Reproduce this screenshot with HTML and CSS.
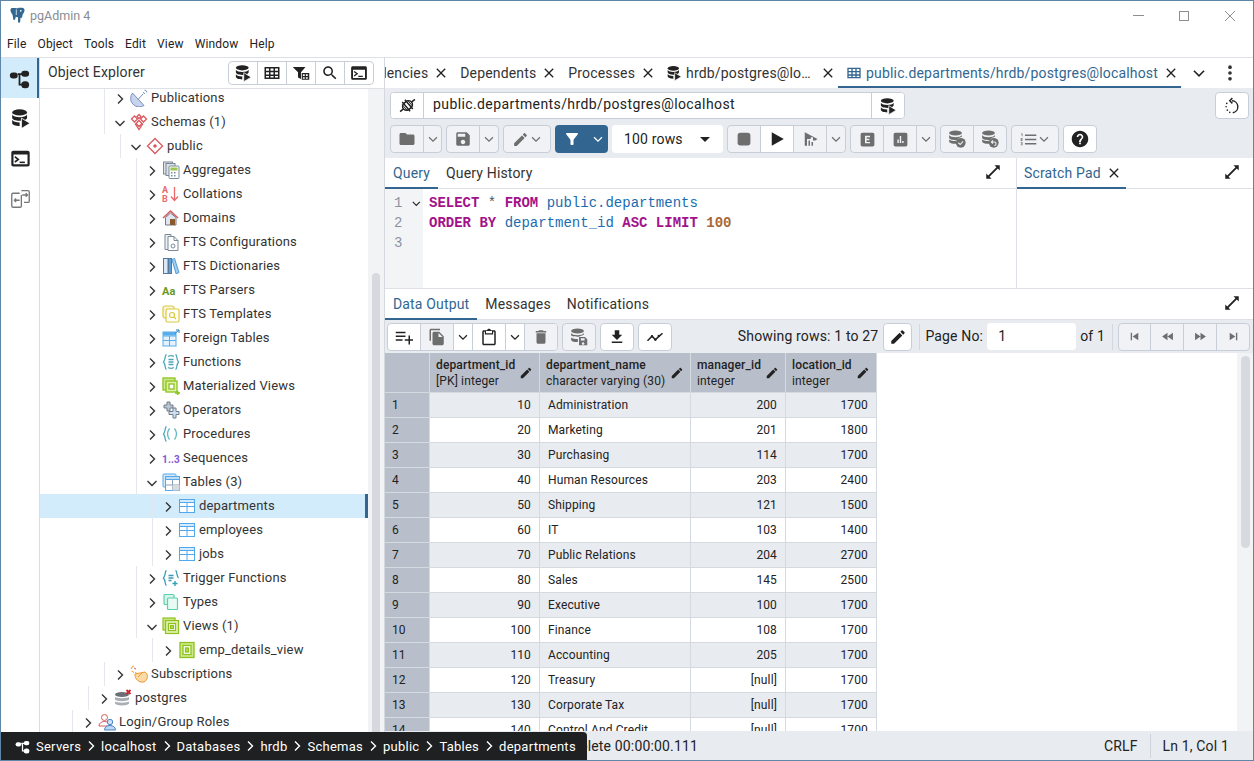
FILE: index.html
```html
<!DOCTYPE html>
<html lang="en">
<head>
    <meta charset="UTF-8">
    <title>pgAdmin 4</title>
    <link rel="stylesheet" href="styles.css">
</head>
<body>

<!-- Icon sprite -->
<svg class="sprite" xmlns="http://www.w3.org/2000/svg">
    <symbol id="i-right" viewBox="0 0 16 16"><path d="M6 3.500 10.500 8 6 12.500" fill="none" stroke="currentColor" stroke-width="1.400"/></symbol>
    <symbol id="i-down" viewBox="0 0 16 16"><path d="M3.500 6 8 10.500 12.500 6" fill="none" stroke="currentColor" stroke-width="1.400"/></symbol>
    <symbol id="i-close" viewBox="0 0 24 24"><path d="M19 6.410 17.590 5 12 10.590 6.410 5 5 6.410 10.590 12 5 17.590 6.410 19 12 13.410 17.590 19 19 17.590 13.410 12z"/></symbol>
    <symbol id="i-expand" viewBox="0 0 24 24"><path d="M21 3h-7l2.600 2.600L5.600 16.600 3 14v7h7l-2.600-2.600L18.400 7.400 21 10z"/></symbol>
    <symbol id="i-edit" viewBox="0 0 24 24"><path d="M3 17.250V21h3.750L17.810 9.940l-3.750-3.750L3 17.250zM20.710 7.040c.39-.39.39-1.020 0-1.410l-2.340-2.340c-.39-.39-1.020-.39-1.410 0l-1.830 1.830 3.750 3.750 1.830-1.830z"/></symbol>
    <symbol id="i-folder" viewBox="0 0 24 24"><path d="M10 4H4c-1.100 0-2 .9-2 2v12c0 1.100.9 2 2 2h16c1.100 0 2-.9 2-2V8c0-1.100-.9-2-2-2h-8l-2-2z"/></symbol>
    <symbol id="i-save" viewBox="0 0 24 24"><path d="M17 3H5c-1.110 0-2 .9-2 2v14c0 1.100.89 2 2 2h14c1.100 0 2-.9 2-2V7l-4-4zm-5 16c-1.660 0-3-1.340-3-3s1.340-3 3-3 3 1.340 3 3-1.340 3-3 3zm3-10H5V5h10v4z"/></symbol>
    <symbol id="i-filter" viewBox="0 0 24 24"><path d="M4.250 5.610C6.270 8.200 10 13 10 13v6c0 .55.45 1 1 1h2c.55 0 1-.45 1-1v-6s3.720-4.800 5.740-7.390c.51-.66.04-1.610-.79-1.610H5.040c-.83 0-1.300.95-.79 1.610z"/></symbol>
    <symbol id="i-stop" viewBox="0 0 24 24"><rect x="3.500" y="3.500" width="17" height="17" rx="3.500"/></symbol>
    <symbol id="i-play" viewBox="0 0 24 24"><path d="M5 3v18l16-9z"/></symbol>
    <symbol id="i-run-explain" viewBox="0 0 24 24"><path d="M5 3v18h3v-9h5v-2.500h3V14h3l3-2z"/><path d="M10 14h2v7h-2zM14 16h2v5h-2z"/></symbol>
    <symbol id="i-help" viewBox="0 0 24 24"><path d="M12 1C5.900 1 1 5.900 1 12s4.900 11 11 11 11-4.900 11-11S18.100 1 12 1zm1.200 18h-2.400v-2.400h2.400V19zm2.500-7.800-1 1.100C13.800 14.100 13.200 14.800 13.200 16h-2.400v-.6c0-1.200.5-2.300 1.300-3.100l1.400-1.400c.4-.4.7-1 .7-1.600 0-1.200-1-2.200-2.200-2.200S9.800 8.100 9.800 9.300H7.600C7.600 6.900 9.600 5 12 5s4.400 1.900 4.400 4.300c0 .8-.3 1.500-.7 1.900z"/></symbol>
    <symbol id="i-download" viewBox="0 0 24 24"><path d="M19 9h-4V3H9v6H5l7 7 7-7zM5 18v2h14v-2H5z"/></symbol>
    <symbol id="i-graph" viewBox="0 0 24 24"><path d="M2 17l6-6 4.500 4.500L22 7" fill="none" stroke="currentColor" stroke-width="2"/><circle cx="8" cy="11" r="1.600"/><circle cx="12.500" cy="15.500" r="1.600"/><circle cx="17" cy="10.500" r="1.600"/></symbol>
    <symbol id="i-delete" viewBox="0 0 24 24"><path d="M6 19c0 1.100.9 2 2 2h8c1.100 0 2-.9 2-2V7H6v12zM19 4h-3.500l-1-1h-5l-1 1H5v2h14V4z"/></symbol>
    <symbol id="i-paste" viewBox="0 0 24 24"><path d="M19 3h-4.200C14.400 1.800 13.300 1 12 1s-2.400.8-2.800 2H5c-1.100 0-2 .9-2 2v16c0 1.100.9 2 2 2h14c1.100 0 2-.9 2-2V5c0-1.100-.9-2-2-2zM8 4h8v3H8zm11 17H5V5h1.500v3.500h11V5H19z"/></symbol>
    <symbol id="i-copy" viewBox="0 0 24 24"><path d="M16 1H4c-1.100 0-2 .9-2 2v14h2V3h12V1zm-1 4 6 6v10c0 1.100-.9 2-2 2H7.990C6.890 23 6 22.100 6 21l.01-14c0-1.100.89-2 1.990-2h7zm-1 7h5.500L14 6.500V12z"/></symbol>
    <symbol id="i-addrow" viewBox="0 0 24 24"><path d="M14 10H1v2h13v-2zm0-5H1v2h13V5zm6 10v-5h-2v5h-5v2h5v5h2v-5h4v-2h-4zM1 17h9v-2H1v2z"/></symbol>
    <symbol id="i-search" viewBox="0 0 24 24"><path d="M15.500 14h-.79l-.28-.27C15.410 12.590 16 11.110 16 9.500 16 5.910 13.090 3 9.500 3S3 5.910 3 9.500 5.910 16 9.500 16c1.610 0 3.090-.59 4.230-1.570l.27.28v.79l5 4.990L20.490 19l-4.990-5zm-6 0C7.010 14 5 11.990 5 9.500S7.010 5 9.500 5 14 7.010 14 9.500 11.990 14 9.500 14z"/></symbol>
    <symbol id="i-grid" viewBox="0 0 24 24"><path d="M2 4h20v16H2zm2 2v3h4V6zm6 0v3h4V6zm6 0v3h4V6zM4 11v3h4v-3zm6 0v3h4v-3zm6 0v3h4v-3zM4 16v2h4v-2zm6 0v2h4v-2zm6 0v2h4v-2z" fill-rule="evenodd"/></symbol>
    <symbol id="i-filter-grid" viewBox="0 0 24 24"><path d="M1 4h17l-6 7v9l-4-2v-7z"/><path d="M13 12h10v9H13zm1.500 1.500v2.500h2.500v-2.500zm4 0v2.500h2.500v-2.500zm-4 4v2h2.500v-2zm4 0v2h2.500v-2z" fill-rule="evenodd"/></symbol>
    <symbol id="i-terminal" viewBox="0 0 24 24"><path d="M4 3h16c1.700 0 2.500 .8 2.500 2.500v13c0 1.700-.8 2.500-2.500 2.500H4c-1.700 0-2.500-.8-2.500-2.500v-13C1.500 3.800 2.300 3 4 3zm0 4.500v11h16v-11z" fill-rule="evenodd"/><path d="M5.500 10l4 3-4 3" fill="none" stroke="currentColor" stroke-width="1.800"/><path d="M11 15.500h6v1.800h-6z"/></symbol>
    <symbol id="i-db" viewBox="0 0 24 24"><ellipse cx="11" cy="5" rx="8.500" ry="3.500"/><path d="M2.500 7.500c1 2 4.500 3 8.500 3s7.500-1 8.500-3v3.500c0 2-3.800 3.500-8.500 3.500S2.500 13 2.500 11z"/><path d="M2.500 13.500c1 2 4.500 3 8.500 3v4c-4.700 0-8.500-1.500-8.500-3.500z"/><path d="M13 11.500l10 6-10 6z" stroke="#fff" stroke-width="1"/></symbol>
    <symbol id="i-nodes" viewBox="0 0 24 24"><rect x="1" y="5" width="9" height="7" rx="3.500"/><rect x="14" y="3" width="9" height="7" rx="3.500"/><rect x="14" y="15" width="9" height="8" rx="4"/><path d="M10 7h5M12 7v12h3" fill="none" stroke="currentColor" stroke-width="2"/></symbol>
    <symbol id="i-diff" viewBox="0 0 24 24" fill="none" stroke="currentColor" stroke-width="1.500"><path d="M11 6H3.500a1.500 1.500 0 0 0-1.500 1.500v13A1.500 1.500 0 0 0 3.500 22h8A1.500 1.500 0 0 0 13 20.500V8M13 3h7.500A1.500 1.500 0 0 1 22 4.500V15a1.500 1.500 0 0 1-1.500 1.500H16"/><path d="M11 14H5M7 12l-2 2 2 2M14 8h6M18 6l2 2-2 2"/></symbol>
    <symbol id="i-plug" viewBox="0 0 24 24" fill="none" stroke="currentColor" stroke-width="1.700"><g transform="rotate(-40 12 12)"><rect x="6" y="7.500" width="12" height="9" rx="4.500"/><path d="M1 12h5M18 12h5M10 5v14M14 5v14"/><path d="M8 7.500v9M16 7.500v9" stroke-width="1"/></g></symbol>
    <symbol id="i-refresh" viewBox="0 0 24 24" fill="none" stroke="currentColor" stroke-width="1.900"><path d="M12 5a8 8 0 0 1 1 15.900"/><path d="M9 20.400l-.01 0M5.800 17.500l-.01 0M4.100 13l-.01 0M5 8.500l-.01 0" stroke-width="2.200" stroke-linecap="round"/><path d="M12.500 1.500 9 5l3.500 3.500"/></symbol>
    <symbol id="i-box-e" viewBox="0 0 24 24"><path d="M3.500 1h17A2.500 2.500 0 0 1 23 3.500v17a2.500 2.500 0 0 1-2.500 2.500h-17A2.500 2.500 0 0 1 1 20.500v-17A2.500 2.500 0 0 1 3.500 1zM8 6v12h8v-2.200h-5.500v-2.800H15v-2.100h-4.500V8.200H16V6z" fill-rule="evenodd"/></symbol>
    <symbol id="i-box-chart" viewBox="0 0 24 24"><path d="M3.500 1h17A2.500 2.500 0 0 1 23 3.500v17a2.500 2.500 0 0 1-2.500 2.500h-17A2.500 2.500 0 0 1 1 20.500v-17A2.500 2.500 0 0 1 3.500 1zM7 12v5.500h2.300V12zm3.800-5.500v11h2.300v-11zm3.800 8v3h2.300v-3z" fill-rule="evenodd"/></symbol>
    <symbol id="i-db-check" viewBox="0 0 24 24"><ellipse cx="10" cy="4" rx="8.500" ry="3.200"/><path d="M1.500 6.500c1 2 4.500 3 8.500 3s7.500-1 8.500-3v2.500C17 9.700 13 10.700 11.500 13.500c-5 .3-10-1-10-3.500zM1.500 12.500c2 1.600 6 2.300 9.500 2.200-.2 1.300 0 2.500.5 3.700-5 .3-10-1-10-3.500z"/><circle cx="17" cy="17" r="6.500"/><path d="M13.800 17l2.400 2.400 4-4.200" fill="none" stroke="#f0f2f5" stroke-width="1.500"/></symbol>
    <symbol id="i-db-undo" viewBox="0 0 24 24"><ellipse cx="10" cy="4" rx="8.500" ry="3.200"/><path d="M1.500 6.500c1 2 4.500 3 8.500 3s7.500-1 8.500-3v2.500C17 9.700 13 10.700 11.500 13.500c-5 .3-10-1-10-3.500zM1.500 12.500c2 1.600 6 2.300 9.500 2.200-.2 1.300 0 2.500.5 3.700-5 .3-10-1-10-3.500z"/><circle cx="17" cy="17" r="6.500"/><path d="M14.500 16h3.300a2.300 2.300 0 0 1 0 4.600M16 13.800 13.800 16l2.200 2.200" fill="none" stroke="#f0f2f5" stroke-width="1.400"/></symbol>
    <symbol id="i-db-save" viewBox="0 0 24 24"><ellipse cx="10" cy="4" rx="8.500" ry="3.200"/><path d="M1.500 6.500c1 2 4.500 3 8.500 3s7.500-1 8.500-3v2.500C17 9.700 13 10.700 11.500 11.500c-5 .3-10-1-10-1.500zM1.500 12.500c2 1.600 6 2.300 9 2.200v4c-5 .3-9-1-9-3.500z"/><path d="M12 12h8l3 3v8H12zm2.500 1.500v3h5v-3zm3 5.500a1.700 1.700 0 1 0 .01 0z" fill-rule="evenodd"/></symbol>
    <symbol id="i-list" viewBox="0 0 24 24"><path d="M7 5h16v2H7zM7 11h16v2H7zM7 17h16v2H7zM1.500 3.500h2v4h-1v-3h-1zM1 10h2.500v2.500H2V13h1.500v1H1v-2.200h1.500V11H1zM1 16h2.500v4H1v-1h1.500v-.5H1.500v-1h1V17H1z"/></symbol>
    <symbol id="i-first" viewBox="0 0 24 24"><path d="M5 5h2.500v14H5zM19 5v14L8.500 12z"/></symbol>
    <symbol id="i-prev" viewBox="0 0 24 24"><path d="M12 5v14L2 12zM22 5v14l-10-7z"/></symbol>
    <symbol id="i-next" viewBox="0 0 24 24"><path d="M2 5v14l10-7zM12 5v14l10-7z"/></symbol>
    <symbol id="i-last" viewBox="0 0 24 24"><path d="M5 5v14l10.500-7zM16.500 5H19v14h-2.500z"/></symbol>
    <symbol id="i-kebab" viewBox="0 0 24 24"><circle cx="12" cy="5" r="2.200"/><circle cx="12" cy="12" r="2.200"/><circle cx="12" cy="19" r="2.200"/></symbol>

    <!-- tree icons -->
    <symbol id="t-pub" viewBox="0 0 18 18"><path d="M2.500 4A8.600 8.600 0 0 0 14 16.500z" fill="#c8d3ee" stroke="#7a8fc0"/><path d="M8 10.500l5-5.500M14.500 1a3 3 0 0 1 2.500 2.500M13 3.500a1.500 1.500 0 0 1 1.500 1.500" fill="none" stroke="#7a8fc0"/></symbol>
    <symbol id="t-schemas" viewBox="0 0 18 18" fill="none" stroke="#d9585f" stroke-width="1.300"><path d="M4.500 3 7.500 6l-3 3-3-3zM13.500 3l3 3-3 3-3-3zM9 7.500l3 3-3 3-3-3z"/><path d="M9 1.500 11 3.500 9 5.500 7 3.500zM5 10.500l4 6 4-6"/></symbol>
    <symbol id="t-public" viewBox="0 0 18 18"><path d="M9 1.500 16.500 9 9 16.500 1.500 9z" fill="#fff" stroke="#d9585f" stroke-width="1.300"/><circle cx="9" cy="9" r="1.800" fill="#d9585f"/></symbol>
    <symbol id="t-agg" viewBox="0 0 18 18"><rect x="1.500" y="1" width="9" height="12" fill="#dfe3e8" stroke="#7b8a99"/><rect x="4" y="2.500" width="9" height="12" fill="#dfe3e8" stroke="#7b8a99"/><rect x="7" y="5" width="10" height="12.500" rx="1" fill="#fff" stroke="#7b8a99"/><rect x="8.500" y="6.500" width="7" height="3" fill="#9ec54e"/><path d="M9 11h1.500v1.500H9zM12 11h1.500v1.500H12zM9 14h1.500v1.500H9zM12 14h1.500v1.500H12z" fill="#7b8a99"/></symbol>
    <symbol id="t-coll" viewBox="0 0 18 18"><text x="0" y="8" class="t-glyph" fill="#e9686d">A</text><text x="0" y="17" class="t-glyph" fill="#e9686d">B</text><path d="M12.500 2v13M9 11.500l3.500 4 3.500-4" fill="none" stroke="#e9686d" stroke-width="1.300"/></symbol>
    <symbol id="t-domain" viewBox="0 0 18 18"><path d="M3.500 8.500V16H14V8.500L8.500 4z" fill="#dfe6ef" stroke="#6e7d8c"/><path d="M1 9 8.500 2 16 9" fill="none" stroke="#d9585f" stroke-width="1.500"/><rect x="8" y="10" width="5" height="6" fill="#8a5a2b"/></symbol>
    <symbol id="t-ftsc" viewBox="0 0 18 18" fill="none" stroke="#7b8a99"><path d="M3 1.500h6v15H3z" fill="#eef0f3"/><path d="M6 3.500h6l4 4v10H6z" fill="#fff"/><path d="M12 3.500v4h4"/><circle cx="11" cy="13" r="2"/></symbol>
    <symbol id="t-ftsd" viewBox="0 0 18 18"><rect x="1.500" y="1.500" width="4.500" height="15" fill="#dbe9f6" stroke="#54789b"/><rect x="6.500" y="1.500" width="3" height="15" fill="#5e9fd6" stroke="#54789b"/><path d="M10 2.500l2.500-1 4.500 14-3 1.200z" fill="#a5cdef" stroke="#4f9cd9"/></symbol>
    <symbol id="t-ftsp" viewBox="0 0 18 18"><text x="0" y="14" class="t-aa">Aa</text></symbol>
    <symbol id="t-ftst" viewBox="0 0 18 18" fill="none" stroke="#dcc93c" stroke-width="1.200"><rect x="1" y="1" width="11" height="12" rx="2" fill="#fbf7d6"/><rect x="4" y="4" width="13" height="13" rx="1.500" fill="#fff"/><circle cx="10" cy="10" r="2.500"/><path d="M12 12l2 2"/></symbol>
    <symbol id="t-foreign" viewBox="0 0 18 18"><rect x="1" y="3" width="13" height="14" fill="#e5f2fc" stroke="#57aeea"/><path d="M1 7h13M1 11.500h13M7.500 7v10" stroke="#57aeea"/><rect x="1" y="3" width="13" height="3.500" fill="#57aeea"/><path d="M13 4.500 17 1M14 1h3v3" fill="none" stroke="#2f7fb8"/></symbol>
    <symbol id="t-func" viewBox="0 0 18 18" fill="none" stroke="#4fa8b8" stroke-width="1.300"><path d="M4.500 1.500C2.500 2 4 6 1.500 9 4 12 2.500 16 4.500 16.500M13.500 1.500C15.500 2 14 6 16.500 9 14 12 15.500 16 13.500 16.500M6 3.500a6 6 0 0 1 6 0M6 14.500a6 6 0 0 0 6 0"/><path d="M6.500 6.500h5M6.500 9h5M6.500 11.500h5"/></symbol>
    <symbol id="t-mview" viewBox="0 0 18 18" fill="none" stroke="#8dc21f" stroke-width="1.300"><rect x="1" y="1" width="12" height="12" fill="#cfe88a"/><rect x="4" y="4" width="11" height="11" fill="#dff0a8"/><rect x="7" y="7" width="5" height="5" fill="#fff"/><path d="M13 16h5M15 14l2 2-2 2"/></symbol>
    <symbol id="t-oper" viewBox="0 0 18 18"><path d="M5 1h3v3h3v3H8v3H5V7H2V4h3z" fill="#bcc4ce" stroke="#6e7d8c"/><path d="M11 7h3v3.500h3v3h-3V17h-3v-3.500H7v-3h4z" fill="#cfdff0" stroke="#6e7d8c"/></symbol>
    <symbol id="t-proc" viewBox="0 0 18 18" fill="none" stroke="#4fa8b8" stroke-width="1.300"><path d="M4.500 1.500C2.500 2 4 6 1.500 9 4 12 2.500 16 4.500 16.500"/><path d="M7.500 3.500C5 7 5 11 7.500 14.500M12.500 3.500c2.500 3.500 2.500 7.500 0 11" stroke="#5fb9c9"/></symbol>
    <symbol id="t-seq" viewBox="0 0 18 18"><text x="0" y="13.500" class="t-seqtext">1..3</text></symbol>
    <symbol id="t-table" viewBox="0 0 18 18"><rect x="1.500" y="2.500" width="15" height="13" fill="#fff" stroke="#52a8ec"/><rect x="1.500" y="2.500" width="15" height="3" fill="#d5eafb" stroke="#52a8ec"/><path d="M1.500 9.500h15M9 5.500v10" stroke="#52a8ec"/></symbol>
    <symbol id="t-tables" viewBox="0 0 18 18"><rect x="1" y="1" width="13" height="13" rx="1" fill="#d5eafb" stroke="#52a8ec"/><rect x="3.500" y="3.500" width="14" height="14" fill="#fff" stroke="#52a8ec"/><rect x="3.500" y="3.500" width="14" height="3" fill="#bfdcf5" stroke="#52a8ec"/><path d="M3.500 12h14M10.500 6.500v11" stroke="#8aa0b5"/><rect x="10.500" y="12" width="7" height="5.500" fill="#d8dce0"/></symbol>
    <symbol id="t-trig" viewBox="0 0 18 18" fill="none" stroke="#3d9ab0" stroke-width="1.300"><path d="M4.500 1.500C2.500 2 4 6 1.500 9 4 12 2.500 16 4.500 16.500M13.500 1.500C15.500 2 14 6 16.500 9"/><path d="M6.500 6.500h5M6.500 9h5M6.500 11.500h3"/><path d="M13 12v5M10.500 14.500h5" stroke="#2a9fb5"/></symbol>
    <symbol id="t-types" viewBox="0 0 18 18" fill="none" stroke="#58d1ac" stroke-width="1.200"><rect x="2" y="1.500" width="10" height="10" rx="1" fill="#d6f5ea"/><rect x="5.500" y="5" width="10" height="11.500" rx="1" fill="#e8faf4"/></symbol>
    <symbol id="t-views" viewBox="0 0 18 18" fill="none" stroke="#8dc21f" stroke-width="1.200"><rect x="1" y="1" width="12" height="12" fill="#cfe88a"/><rect x="3.500" y="3.500" width="13" height="13" fill="#dff0a8"/><rect x="6.500" y="6.500" width="7" height="7" fill="#fff"/><rect x="8.500" y="8.500" width="3" height="3" fill="#b6dc56"/></symbol>
    <symbol id="t-view" viewBox="0 0 18 18" fill="none" stroke="#8dc21f" stroke-width="1.300"><rect x="2" y="1.500" width="14" height="15" fill="#cfe88a"/><rect x="5" y="4.500" width="8" height="9" fill="#fff"/><rect x="7.500" y="7" width="3" height="4" fill="#b6dc56"/></symbol>
    <symbol id="t-subs" viewBox="0 0 18 18"><path d="M5 9a7.500 7.500 0 0 0 9 8 6 6 0 0 0 3.500-5.500c0-2-1-3.500-2.500-4.500z" fill="#fbd9a8" stroke="#ef9b2d"/><path d="M12 8 8 12M1 4a4 4 0 0 1 3-3M5 7.500l2 1M1.500 6 4 7.500" fill="none" stroke="#ef9b2d"/><path d="M4 3l2 1" stroke="#d9585f"/></symbol>
    <symbol id="t-server" viewBox="0 0 18 18"><ellipse cx="8" cy="5.500" rx="7" ry="2.500" fill="#6a6f75"/><path d="M1 8c1.500 1.500 12.500 1.500 14 0v2.500c-1.500 2.300-12.500 2.300-14 0zM1 12.500c1.500 1.500 12.500 1.500 14 0v2c-1.500 2.500-12.500 2.500-14 0z" fill="#a9aeb4"/><path d="M12.500 1l4 4M16.500 1l-4 4" stroke="#d3202d" stroke-width="1.800"/></symbol>
    <symbol id="t-roles" viewBox="0 0 18 18"><circle cx="6.500" cy="4.500" r="3" fill="#fff" stroke="#d9585f"/><path d="M1 13c0-3 2.500-4.500 5.500-4.500S12 10 12 13z" fill="#fff" stroke="#d9585f"/><circle cx="12" cy="9" r="2.700" fill="#cfe3f7" stroke="#4a86c5"/><path d="M6.500 17c0-3 2.500-4.500 5.500-4.500S17.500 14 17.500 17z" fill="#bcd8f3" stroke="#4a86c5"/></symbol>
</svg>

<div class="window">
    <!-- Title bar -->
    <div class="titlebar">
        <svg class="logo" viewBox="0 0 16 18"><path d="M2 1h4c.5 0 1 .3 1.500.3S9 .8 10 .8h3c1.500 0 2.500 1 2.500 2.700 0 2-1.500 3.500-2 4.500-.4 1-.2 2.500-.8 3.200-.5.6-1.200.4-1.500-.2l-.3 4.300c-.1 1.200-1 1.900-1.700 1.400-.6-.5-.7-1.500-.7-2.700V10.500c-1.200.7-1.800.3-2.200-.5l-.8 3c-.4 1-1.300 1.200-1.800.4C3 12 3.300 9.500 2.500 8 1.700 6.500.5 5.500.5 3.500.5 2 1 1 2 1z"/><circle cx="11.500" cy="4" r=".9" fill="#fff"/><path d="M6.700 2.500v6" stroke="#fff" stroke-width=".8"/></svg>
        <span class="app-name">pgAdmin 4</span>
        <div class="win-controls">
            <span class="win-min"></span>
            <span class="win-max"></span>
            <svg class="win-close" viewBox="0 0 12 12"><path d="M1 1l10 10M11 1 1 11" stroke="#8a8f94" stroke-width="1" fill="none"/></svg>
        </div>
    </div>

    <!-- Menu -->
    <div class="menubar">
        <a>File</a><a>Object</a><a>Tools</a><a>Edit</a><a>View</a><a>Window</a><a>Help</a>
    </div>

    <div class="app">
        <!-- Left rail -->
        <div class="rail">
            <div class="rail-item active"><svg class="rail-ico"><use href="#i-nodes"/></svg></div>
            <div class="rail-item"><svg class="rail-ico"><use href="#i-db"/></svg></div>
            <div class="rail-item"><svg class="rail-ico"><use href="#i-terminal"/></svg></div>
            <div class="rail-item muted"><svg class="rail-ico"><use href="#i-diff"/></svg></div>
        </div>

        <!-- Object explorer -->
        <div class="explorer">
            <div class="explorer-head">
                <span class="panel-title">Object Explorer</span>
                <div class="group light-group head-tools">
                    <span class="btn"><svg class="ico"><use href="#i-db"/></svg></span>
                    <span class="btn"><svg class="ico"><use href="#i-grid"/></svg></span>
                    <span class="btn"><svg class="ico"><use href="#i-filter-grid"/></svg></span>
                    <span class="btn"><svg class="ico"><use href="#i-search"/></svg></span>
                    <span class="btn"><svg class="ico"><use href="#i-terminal"/></svg></span>
                </div>
            </div>
            <div class="explorer-body">
                <div class="tree">
                    <div class="tree-inner">
                        <div class="row"><span class="indent lvl3"></span><svg class="twist"><use href="#i-right"/></svg><svg class="node"><use href="#t-pub"/></svg><span>Publications</span></div>
                        <div class="row"><span class="indent lvl3"></span><svg class="twist"><use href="#i-down"/></svg><svg class="node"><use href="#t-schemas"/></svg><span>Schemas (1)</span></div>
                        <div class="row"><span class="indent lvl4"></span><svg class="twist"><use href="#i-down"/></svg><svg class="node"><use href="#t-public"/></svg><span>public</span></div>
                        <div class="row"><span class="indent lvl5"></span><svg class="twist"><use href="#i-right"/></svg><svg class="node"><use href="#t-agg"/></svg><span>Aggregates</span></div>
                        <div class="row"><span class="indent lvl5"></span><svg class="twist"><use href="#i-right"/></svg><svg class="node"><use href="#t-coll"/></svg><span>Collations</span></div>
                        <div class="row"><span class="indent lvl5"></span><svg class="twist"><use href="#i-right"/></svg><svg class="node"><use href="#t-domain"/></svg><span>Domains</span></div>
                        <div class="row"><span class="indent lvl5"></span><svg class="twist"><use href="#i-right"/></svg><svg class="node"><use href="#t-ftsc"/></svg><span>FTS Configurations</span></div>
                        <div class="row"><span class="indent lvl5"></span><svg class="twist"><use href="#i-right"/></svg><svg class="node"><use href="#t-ftsd"/></svg><span>FTS Dictionaries</span></div>
                        <div class="row"><span class="indent lvl5"></span><svg class="twist"><use href="#i-right"/></svg><svg class="node"><use href="#t-ftsp"/></svg><span>FTS Parsers</span></div>
                        <div class="row"><span class="indent lvl5"></span><svg class="twist"><use href="#i-right"/></svg><svg class="node"><use href="#t-ftst"/></svg><span>FTS Templates</span></div>
                        <div class="row"><span class="indent lvl5"></span><svg class="twist"><use href="#i-right"/></svg><svg class="node"><use href="#t-foreign"/></svg><span>Foreign Tables</span></div>
                        <div class="row"><span class="indent lvl5"></span><svg class="twist"><use href="#i-right"/></svg><svg class="node"><use href="#t-func"/></svg><span>Functions</span></div>
                        <div class="row"><span class="indent lvl5"></span><svg class="twist"><use href="#i-right"/></svg><svg class="node"><use href="#t-mview"/></svg><span>Materialized Views</span></div>
                        <div class="row"><span class="indent lvl5"></span><svg class="twist"><use href="#i-right"/></svg><svg class="node"><use href="#t-oper"/></svg><span>Operators</span></div>
                        <div class="row"><span class="indent lvl5"></span><svg class="twist"><use href="#i-right"/></svg><svg class="node"><use href="#t-proc"/></svg><span>Procedures</span></div>
                        <div class="row"><span class="indent lvl5"></span><svg class="twist"><use href="#i-right"/></svg><svg class="node"><use href="#t-seq"/></svg><span>Sequences</span></div>
                        <div class="row"><span class="indent lvl5"></span><svg class="twist"><use href="#i-down"/></svg><svg class="node"><use href="#t-tables"/></svg><span>Tables (3)</span></div>
                        <div class="row selected"><span class="indent lvl6"></span><svg class="twist"><use href="#i-right"/></svg><svg class="node"><use href="#t-table"/></svg><span>departments</span></div>
                        <div class="row"><span class="indent lvl6"></span><svg class="twist"><use href="#i-right"/></svg><svg class="node"><use href="#t-table"/></svg><span>employees</span></div>
                        <div class="row"><span class="indent lvl6"></span><svg class="twist"><use href="#i-right"/></svg><svg class="node"><use href="#t-table"/></svg><span>jobs</span></div>
                        <div class="row"><span class="indent lvl5"></span><svg class="twist"><use href="#i-right"/></svg><svg class="node"><use href="#t-trig"/></svg><span>Trigger Functions</span></div>
                        <div class="row"><span class="indent lvl5"></span><svg class="twist"><use href="#i-right"/></svg><svg class="node"><use href="#t-types"/></svg><span>Types</span></div>
                        <div class="row"><span class="indent lvl5"></span><svg class="twist"><use href="#i-down"/></svg><svg class="node"><use href="#t-views"/></svg><span>Views (1)</span></div>
                        <div class="row"><span class="indent lvl6"></span><svg class="twist"><use href="#i-right"/></svg><svg class="node"><use href="#t-view"/></svg><span>emp_details_view</span></div>
                        <div class="row"><span class="indent lvl3"></span><svg class="twist"><use href="#i-right"/></svg><svg class="node"><use href="#t-subs"/></svg><span>Subscriptions</span></div>
                        <div class="row"><span class="indent lvl2"></span><svg class="twist"><use href="#i-right"/></svg><svg class="node"><use href="#t-server"/></svg><span>postgres</span></div>
                        <div class="row"><span class="indent lvl1"></span><svg class="twist"><use href="#i-right"/></svg><svg class="node"><use href="#t-roles"/></svg><span>Login/Group Roles</span></div>
                    </div>
                </div>
                <div class="tree-scroll"><div class="tree-thumb"></div></div>
            </div>
        </div>

        <!-- Query tool -->
        <div class="main">
            <div class="tabbar">
                <div class="tab-strip">
                    <div class="doc-tab"><span>Dependencies</span><svg class="x"><use href="#i-close"/></svg></div>
                    <div class="doc-tab"><span>Dependents</span><svg class="x"><use href="#i-close"/></svg></div>
                    <div class="doc-tab"><span>Processes</span><svg class="x"><use href="#i-close"/></svg></div>
                    <div class="doc-tab"><svg class="tab-ico"><use href="#i-db"/></svg><span class="tab-short">hrdb/postgres@localhost</span><svg class="x"><use href="#i-close"/></svg></div>
                    <div class="doc-tab active"><svg class="tab-ico"><use href="#i-grid"/></svg><span>public.departments/hrdb/postgres@localhost</span><svg class="x"><use href="#i-close"/></svg></div>
                </div>
                <svg class="tab-more"><use href="#i-down"/></svg>
                <svg class="tab-kebab"><use href="#i-kebab"/></svg>
            </div>

            <div class="query-toolbar">
                <div class="conn-row">
                    <div class="conn">
                        <span class="btn light"><svg class="ico"><use href="#i-plug"/></svg></span>
                        <span class="conn-text">public.departments/hrdb/postgres@localhost</span>
                        <span class="btn light"><svg class="ico"><use href="#i-db"/></svg></span>
                    </div>
                    <div class="group light-group refresh"><span class="btn"><svg class="ico"><use href="#i-refresh"/></svg></span></div>
                </div>
                <div class="tool-row">
                    <div class="group off"><span class="btn"><svg class="ico"><use href="#i-folder"/></svg></span><span class="btn caret caret-sm"><svg class="chev"><use href="#i-down"/></svg></span></div>
                    <div class="group off"><span class="btn"><svg class="ico"><use href="#i-save"/></svg></span><span class="btn caret"><svg class="chev"><use href="#i-down"/></svg></span></div>
                    <div class="group off"><span class="btn btn-wide"><svg class="ico ico-sm"><use href="#i-edit"/></svg><svg class="chev"><use href="#i-down"/></svg></span></div>
                    <div class="filter-btn"><svg class="ico"><use href="#i-filter"/></svg><svg class="chev"><use href="#i-down"/></svg></div>
                    <div class="rows-select"><span>100 rows</span><span class="select-caret"></span></div>
                    <div class="group off">
                        <span class="btn"><svg class="ico"><use href="#i-stop"/></svg></span>
                        <span class="btn on"><svg class="ico"><use href="#i-play"/></svg></span>
                        <span class="btn"><svg class="ico"><use href="#i-run-explain"/></svg></span>
                        <span class="btn caret"><svg class="chev"><use href="#i-down"/></svg></span>
                    </div>
                    <div class="group off">
                        <span class="btn"><svg class="ico ico-box"><use href="#i-box-e"/></svg></span>
                        <span class="btn"><svg class="ico ico-box"><use href="#i-box-chart"/></svg></span>
                        <span class="btn caret"><svg class="chev"><use href="#i-down"/></svg></span>
                    </div>
                    <div class="group off">
                        <span class="btn"><svg class="ico"><use href="#i-db-check"/></svg></span>
                        <span class="btn"><svg class="ico"><use href="#i-db-undo"/></svg></span>
                    </div>
                    <div class="group off"><span class="btn btn-wide"><svg class="ico ico-sm"><use href="#i-list"/></svg><svg class="chev"><use href="#i-down"/></svg></span></div>
                    <div class="group light-group"><span class="btn"><svg class="ico"><use href="#i-help"/></svg></span></div>
                </div>
            </div>

            <!-- Editor and scratch pad -->
            <div class="editor-pane">
                <div class="editor-col">
                    <div class="sub-tabs">
                        <span class="sub-tab active">Query</span>
                        <span class="sub-tab">Query History</span>
                        <svg class="expand"><use href="#i-expand"/></svg>
                    </div>
                    <div class="editor">
                        <div class="gutter">
                            <div class="gutter-line"><span>1</span><svg class="fold"><use href="#i-down"/></svg></div>
                            <div class="gutter-line"><span>2</span></div>
                            <div class="gutter-line"><span>3</span></div>
                        </div>
                        <div class="code">
                            <div class="code-line"><span class="kw">SELECT</span> <span class="op">*</span> <span class="kw">FROM</span> <span class="id">public.departments</span></div>
                            <div class="code-line"><span class="kw">ORDER BY</span> <span class="id">department_id</span> <span class="kw">ASC LIMIT</span> <span class="num">100</span></div>
                        </div>
                    </div>
                </div>
                <div class="scratch-col">
                    <div class="sub-tabs">
                        <span class="sub-tab active scratch-tab">Scratch Pad<svg class="x"><use href="#i-close"/></svg></span>
                        <svg class="expand"><use href="#i-expand"/></svg>
                    </div>
                </div>
            </div>

            <!-- Results -->
            <div class="results">
                <div class="sub-tabs">
                    <span class="sub-tab active">Data Output</span>
                    <span class="sub-tab">Messages</span>
                    <span class="sub-tab">Notifications</span>
                    <svg class="expand"><use href="#i-expand"/></svg>
                </div>
                <div class="data-toolbar">
                    <div class="group light-group">
                        <span class="btn"><svg class="ico"><use href="#i-addrow"/></svg></span>
                        <span class="btn dim"><svg class="ico"><use href="#i-copy"/></svg></span>
                        <span class="btn caret"><svg class="chev"><use href="#i-down"/></svg></span>
                        <span class="btn"><svg class="ico"><use href="#i-paste"/></svg></span>
                        <span class="btn caret"><svg class="chev"><use href="#i-down"/></svg></span>
                        <span class="btn dim"><svg class="ico"><use href="#i-delete"/></svg></span>
                    </div>
                    <div class="group off"><span class="btn"><svg class="ico"><use href="#i-db-save"/></svg></span></div>
                    <div class="group light-group"><span class="btn"><svg class="ico"><use href="#i-download"/></svg></span></div>
                    <div class="group light-group"><span class="btn"><svg class="ico"><use href="#i-graph"/></svg></span></div>
                    <div class="pager">
                        <span class="pg-text">Showing rows: 1 to 27</span>
                        <div class="group light-group page-edit"><span class="btn"><svg class="ico"><use href="#i-edit"/></svg></span></div>
                        <span class="vsep"></span>
                        <span class="pg-text">Page No:</span>
                        <span class="page-input">1</span>
                        <span class="pg-text">of 1</span>
                        <span class="vsep"></span>
                        <div class="group off nav-group">
                            <span class="btn"><svg class="ico ico-xs"><use href="#i-first"/></svg></span>
                            <span class="btn"><svg class="ico ico-xs"><use href="#i-prev"/></svg></span>
                            <span class="btn"><svg class="ico ico-xs"><use href="#i-next"/></svg></span>
                            <span class="btn"><svg class="ico ico-xs"><use href="#i-last"/></svg></span>
                        </div>
                    </div>
                </div>
                <div class="grid-wrap">
                    <div class="grid-area">
                        <table class="grid">
                            <colgroup><col class="c0"><col class="c1"><col class="c2"><col class="c3"><col class="c4"></colgroup>
                            <thead>
                                <tr>
                                    <th></th>
                                    <th><div class="th-box"><div><b>department_id</b><br>[PK] integer</div><svg class="th-edit"><use href="#i-edit"/></svg></div></th>
                                    <th><div class="th-box"><div><b>department_name</b><br>character varying (30)</div><svg class="th-edit"><use href="#i-edit"/></svg></div></th>
                                    <th><div class="th-box"><div><b>manager_id</b><br>integer</div><svg class="th-edit"><use href="#i-edit"/></svg></div></th>
                                    <th><div class="th-box"><div><b>location_id</b><br>integer</div><svg class="th-edit"><use href="#i-edit"/></svg></div></th>
                                </tr>
                            </thead>
                            <tbody>
                                <tr><td class="rn">1</td><td class="n">10</td><td>Administration</td><td class="n">200</td><td class="n">1700</td></tr>
                                <tr><td class="rn">2</td><td class="n">20</td><td>Marketing</td><td class="n">201</td><td class="n">1800</td></tr>
                                <tr><td class="rn">3</td><td class="n">30</td><td>Purchasing</td><td class="n">114</td><td class="n">1700</td></tr>
                                <tr><td class="rn">4</td><td class="n">40</td><td>Human Resources</td><td class="n">203</td><td class="n">2400</td></tr>
                                <tr><td class="rn">5</td><td class="n">50</td><td>Shipping</td><td class="n">121</td><td class="n">1500</td></tr>
                                <tr><td class="rn">6</td><td class="n">60</td><td>IT</td><td class="n">103</td><td class="n">1400</td></tr>
                                <tr><td class="rn">7</td><td class="n">70</td><td>Public Relations</td><td class="n">204</td><td class="n">2700</td></tr>
                                <tr><td class="rn">8</td><td class="n">80</td><td>Sales</td><td class="n">145</td><td class="n">2500</td></tr>
                                <tr><td class="rn">9</td><td class="n">90</td><td>Executive</td><td class="n">100</td><td class="n">1700</td></tr>
                                <tr><td class="rn">10</td><td class="n">100</td><td>Finance</td><td class="n">108</td><td class="n">1700</td></tr>
                                <tr><td class="rn">11</td><td class="n">110</td><td>Accounting</td><td class="n">205</td><td class="n">1700</td></tr>
                                <tr><td class="rn">12</td><td class="n">120</td><td>Treasury</td><td class="n">[null]</td><td class="n">1700</td></tr>
                                <tr><td class="rn">13</td><td class="n">130</td><td>Corporate Tax</td><td class="n">[null]</td><td class="n">1700</td></tr>
                                <tr><td class="rn">14</td><td class="n">140</td><td>Control And Credit</td><td class="n">[null]</td><td class="n">1700</td></tr>
                            </tbody>
                        </table>
                    </div>
                    <div class="grid-scroll"><div class="grid-thumb"></div></div>
                </div>
            </div>

            <!-- Status bar -->
            <div class="statusbar">
                <span class="status-msg">Total rows: 27</span>
                <span class="status-msg">Query complete 00:00:00.111</span>
                <span class="status-end">CRLF</span>
                <span class="status-end bordered">Ln 1, Col 1</span>
            </div>
        </div>
    </div>

    <!-- Breadcrumb popup sits over the explorer and status bar -->
    <div class="breadcrumbs">
        <svg class="crumb-ico"><use href="#i-nodes"/></svg>
        <span>Servers</span><svg class="crumb-sep"><use href="#i-right"/></svg>
        <span>localhost</span><svg class="crumb-sep"><use href="#i-right"/></svg>
        <span>Databases</span><svg class="crumb-sep"><use href="#i-right"/></svg>
        <span>hrdb</span><svg class="crumb-sep"><use href="#i-right"/></svg>
        <span>Schemas</span><svg class="crumb-sep"><use href="#i-right"/></svg>
        <span>public</span><svg class="crumb-sep"><use href="#i-right"/></svg>
        <span>Tables</span><svg class="crumb-sep"><use href="#i-right"/></svg>
        <span>departments</span>
    </div>
</div>

</body>
</html>
```

FILE: styles.css
```css
* {
    box-sizing: border-box;
}

html, body {
    margin: 0;
    height: 100%;
    overflow: hidden;
    background: #fff;
}

body {
    font-family: "Roboto", sans-serif;
    font-size: 14px;
    letter-spacing: .16px;
    color: #222;
}

.sprite {
    display: none;
}

.t-glyph {
    font: bold 9px "Roboto", sans-serif;
}

.t-aa {
    font: bold 11px "Roboto", sans-serif;
    fill: #6a9a1f;
}

.t-seqtext {
    font: bold 10px "Roboto", sans-serif;
    fill: #8455d6;
}

.window {
    position: relative;
    width: 1254px;
    height: 761px;
    display: flex;
    flex-direction: column;
    border: 1px solid #5f86a6;
    overflow: hidden;
    background: #fff;
}

/* Title bar */
.titlebar {
    height: 29px;
    display: flex;
    align-items: center;
    padding-left: 9px;
    flex-shrink: 0;
}

.logo {
    width: 15px;
    height: 17px;
    fill: #336791;
}

.app-name {
    margin-left: 5px;
    font-size: 12.500px;
    letter-spacing: 0;
    color: #888d93;
}

.win-controls {
    margin-left: auto;
    display: flex;
    align-items: center;
    height: 100%;
}

.win-min {
    width: 11px;
    height: 1px;
    background: #8a8f94;
    margin-right: 35px;
}

.win-max {
    width: 10px;
    height: 10px;
    border: 1px solid #8a8f94;
    margin-right: 35px;
}

.win-close {
    width: 12px;
    height: 12px;
    margin-right: 17px;
}

/* Menu */
.menubar {
    height: 28px;
    display: flex;
    align-items: center;
    gap: 11px;
    padding-left: 6px;
    font-size: 12px;
    border-bottom: 1px solid #dde0e5;
    flex-shrink: 0;
}

.app {
    flex: 1;
    display: flex;
    min-height: 0;
}

/* Left rail */
.rail {
    width: 39px;
    border-right: 1px solid #dadde3;
    flex-shrink: 0;
}

.rail-item {
    height: 40px;
    display: flex;
    align-items: center;
    justify-content: center;
    color: #222;
}

.rail-item.active {
    background: #d3ecfb;
    border-right: 2px solid #326690;
}

.rail-item.muted {
    color: #777;
}

.rail-ico {
    width: 21px;
    height: 21px;
    fill: currentColor;
}

/* Object explorer */
.explorer {
    width: 345px;
    display: flex;
    flex-direction: column;
    border-right: 1px solid #d5d9df;
    flex-shrink: 0;
}

.explorer-head {
    height: 31px;
    display: flex;
    align-items: center;
    justify-content: space-between;
    padding: 0 10px 0 8px;
    border-bottom: 1px solid #dde0e5;
    flex-shrink: 0;
}

.panel-title {
    font-size: 14px;
    color: #333;
    padding-bottom: 2px;
}

.group.head-tools {
    height: 24px;
}

.head-tools .btn {
    width: 29px;
}

.head-tools .btn:first-child {
    width: 28px;
}

.explorer-body {
    flex: 1;
    display: flex;
    min-height: 0;
}

.tree {
    flex: 1;
    overflow: hidden;
}

.tree-inner {
    margin-top: -3px;
}

.row {
    height: 24px;
    display: flex;
    align-items: stretch;
    font-size: 13px;
    color: #333;
}

.row span:last-child {
    margin-left: 3px;
    line-height: 24px;
    white-space: nowrap;
}

.row.selected {
    background: #d3ecfb;
    border-right: 3px solid #326690;
}

.indent {
    border-right: 1px solid #e4e7eb;
    flex-shrink: 0;
}

.lvl1 { width: 33px; }
.lvl2 { width: 49px; }
.lvl3 { width: 65px; }
.lvl4 { width: 81px; }
.lvl5 { width: 97px; }
.lvl6 { width: 113px; }

.twist {
    width: 16px;
    height: 16px;
    margin: 5px 0 0 7px;
    color: #333;
    flex-shrink: 0;
}

.node {
    width: 18px;
    height: 18px;
    margin: 3px 0 0 2px;
    flex-shrink: 0;
}

.tree-scroll {
    width: 16px;
    background: #f2f3f5;
    padding: 184px 0 0 4px;
    flex-shrink: 0;
}

.tree-thumb {
    width: 8px;
    height: 100%;
    border-radius: 4px 4px 0 0;
    background: #d6d9de;
}

/* Main area */
.main {
    flex: 1;
    min-width: 0;
    display: flex;
    flex-direction: column;
}

.tabbar {
    height: 30px;
    display: flex;
    align-items: center;
    flex-shrink: 0;
}

.tab-strip {
    width: 796px;
    height: 100%;
    display: flex;
    justify-content: flex-end;
    overflow: hidden;
}

.doc-tab {
    display: flex;
    align-items: center;
    flex-shrink: 0;
    padding: 2px 2px 0 8px;
    gap: 5px;
    white-space: nowrap;
    color: #333;
    border-bottom: 2px solid transparent;
}

.doc-tab:nth-child(-n+3) {
    padding-left: 9px;
}

.doc-tab.active {
    color: #326690;
    border-bottom-color: #326690;
}

.doc-tab.active .tab-ico {
    fill: #326690;
}

.tab-ico {
    width: 16px;
    height: 16px;
    fill: #222;
    margin-right: -1px;
}

.tab-short {
    width: 129px;
    overflow: hidden;
    text-overflow: ellipsis;
}

.x {
    width: 16px;
    height: 16px;
    fill: #222;
    flex-shrink: 0;
}

.tab-more {
    width: 18px;
    height: 18px;
    margin-left: 9px;
    color: #222;
    stroke-width: 2;
}

.tab-kebab {
    width: 20px;
    height: 20px;
    margin-left: 12px;
    fill: #333;
}

/* Toolbars */
.query-toolbar {
    height: 70px;
    padding: 4px 2px 0 5px;
    background: #e8ebf0;
    flex-shrink: 0;
}

.conn-row {
    display: flex;
    justify-content: space-between;
    height: 27px;
}

.conn {
    width: 515px;
    display: flex;
    border: 1px solid #c8ced8;
    border-radius: 4px;
    background: #fff;
    overflow: hidden;
}

.conn .btn {
    width: 33px;
    border-left: 0;
    background: #fff;
    flex-shrink: 0;
}

.conn .ico {
    width: 21px;
    height: 21px;
}

.conn .btn:last-child .ico {
    width: 18px;
    height: 18px;
}

.conn .btn:last-child {
    border-left: 1px solid #c8ced8;
}

.conn-text {
    flex: 1;
    line-height: 23px;
    padding-left: 9px;
    letter-spacing: .4px;
    border-left: 1px solid #c8ced8;
}

.tool-row {
    display: flex;
    gap: 4px;
    margin-top: 6px;
    height: 28px;
}

.group {
    display: flex;
    border: 1px solid #c8ced8;
    border-radius: 4px;
    height: 100%;
    overflow: hidden;
    flex-shrink: 0;
}

.btn {
    width: 33px;
    display: flex;
    align-items: center;
    justify-content: center;
    border-left: 1px solid #c8ced8;
    color: #222;
}

.btn:first-child {
    width: 32px;
    border-left: 0;
}

.btn.caret {
    width: 19px;
}

.btn.caret-sm {
    width: 18px;
}

.btn.btn-wide {
    width: 46px;
    gap: 0;
}

.group.off {
    background: #f0f2f5;
}

.group.off .btn {
    color: #6e6e6e;
}

.group.off .btn.on {
    background: #fff;
    color: #222;
}

.light-group {
    background: #fff;
}

.btn.dim {
    background: #f0f2f5;
    color: #6e6e6e;
}

.ico {
    width: 18px;
    height: 18px;
    fill: currentColor;
}

.ico-sm {
    width: 17px;
    height: 17px;
}

.ico-xs {
    width: 13px;
    height: 13px;
}

.ico-box {
    width: 15px;
    height: 15px;
}

.chev {
    width: 14px;
    height: 14px;
    flex-shrink: 0;
}

.refresh {
    height: 27px;
    margin-right: 2px;
}

.filter-btn {
    width: 53px;
    display: flex;
    align-items: center;
    justify-content: space-between;
    padding: 0 3px 0 8px;
    border-radius: 4px;
    background: #326690;
    color: #fff;
    fill: #fff;
}

.rows-select {
    width: 111px;
    display: flex;
    align-items: center;
    justify-content: space-between;
    padding: 0 13px 0 12px;
    border-radius: 4px;
    background: #fff;
}

.select-caret {
    width: 0;
    height: 0;
    border: 5px solid transparent;
    border-top-color: #222;
    border-bottom: 0;
}

/* Sub tabs */
.sub-tabs {
    height: 31px;
    display: flex;
    align-items: stretch;
    border-bottom: 1px solid #dde0e5;
    flex-shrink: 0;
}

.sub-tab {
    display: flex;
    align-items: center;
    padding: 0 8px;
    color: #333;
    margin-bottom: -1px;
    border-bottom: 2px solid transparent;
}

.sub-tab.active {
    color: #326690;
    border-bottom-color: #326690;
}

.scratch-tab {
    gap: 5px;
    padding: 0 4px 0 7px;
}

.expand {
    width: 18px;
    height: 18px;
    margin: 5px 12px 0 auto;
    fill: #222;
}

/* Editor */
.editor-pane {
    height: 131px;
    display: flex;
    border-bottom: 1px solid #dde0e5;
    flex-shrink: 0;
}

.editor-col {
    width: 631px;
    display: flex;
    flex-direction: column;
}

.editor-col .expand {
    margin-right: 14px;
}

.scratch-col {
    flex: 1;
    border-left: 1px solid #dde0e5;
}

.editor {
    flex: 1;
    display: flex;
}

.gutter {
    width: 38px;
    padding-top: 4px;
    background: #f3f4f6;
    color: #8a94a0;
    font: 14px/20px "Liberation Mono", monospace;
    letter-spacing: 0;
}

.gutter-line {
    height: 20px;
    display: flex;
    align-items: center;
    padding-left: 9px;
}

.fold {
    width: 13px;
    height: 13px;
    margin-left: 8px;
    color: #222;
}

.code {
    padding: 4px 0 0 6px;
    font: 14px/20px "Liberation Mono", monospace;
    letter-spacing: 0;
}

.code-line {
    white-space: pre;
}

.kw {
    color: #a3128a;
    font-weight: bold;
}

.op {
    color: #555;
}

.id {
    color: #1a6cb0;
}

.num {
    color: #a5683a;
    font-weight: bold;
}

/* Results */
.results {
    flex: 1;
    min-height: 0;
    display: flex;
    flex-direction: column;
}

.data-toolbar {
    height: 33px;
    display: flex;
    align-items: center;
    gap: 4px;
    padding: 0 3px 0 2px;
    background: #e8ebf0;
    flex-shrink: 0;
}

.data-toolbar .group {
    height: 28px;
}

.pager {
    margin-left: auto;
    display: flex;
    align-items: center;
}

.pg-text {
    padding-bottom: 2px;
}

.page-edit {
    margin-left: 5px;
}

.page-edit .btn {
    width: 27px;
}

.nav-group .btn:first-child {
    width: 31px;
}

.vsep {
    width: 1px;
    height: 26px;
    margin: 0 5px 0 7px;
    background: #d3d7de;
}

.page-input {
    width: 89px;
    height: 27px;
    margin: 0 4px;
    padding-left: 11px;
    line-height: 27px;
    border-radius: 4px;
    background: #fff;
}

/* Grid */
.grid-wrap {
    flex: 1;
    min-height: 0;
    display: flex;
}

.grid-area {
    flex: 1;
    min-width: 0;
    overflow: hidden;
}

.grid {
    table-layout: fixed;
    width: 492px;
    border-collapse: separate;
    border-spacing: 0;
    font-size: 12px;
    letter-spacing: .13px;
}

.c0 { width: 45px; }
.c1 { width: 110px; }
.c2 { width: 151px; }
.c3 { width: 95px; }
.c4 { width: 91px; }

.grid th {
    height: 40px;
    padding: 0 6px;
    background: #b8bfcb;
    font-weight: normal;
    text-align: left;
    line-height: 16px;
    border-right: 1px solid #d5d9e0;
    border-bottom: 1px solid #d5d9e0;
    white-space: nowrap;
}

.grid b {
    font-weight: 500;
}

.th-box {
    display: flex;
    align-items: center;
    justify-content: space-between;
}

.th-edit {
    width: 14px;
    height: 14px;
    fill: #222;
}

.grid td {
    height: 25px;
    padding: 0 8px;
    border-right: 1px solid #d5d9e0;
    border-bottom: 1px solid #d5d9e0;
    white-space: nowrap;
}

.grid tbody tr:nth-child(odd) td {
    background: #e8ebf0;
}

.grid td.n {
    text-align: right;
    padding-right: 8px;
}

.grid tbody tr td.rn {
    padding-left: 7px;
    background: #b8bfcb;
}

.grid-scroll {
    width: 16px;
    padding: 3px 0 0 4px;
    background: #f2f3f5;
    flex-shrink: 0;
}

.grid-thumb {
    width: 9px;
    height: 192px;
    border-radius: 5px;
    background: #d6d9de;
}

/* Status bar */
.statusbar {
    height: 29px;
    display: flex;
    align-items: center;
    padding-left: 8px;
    background: #e8ebf0;
    flex-shrink: 0;
}

.status-msg + .status-msg {
    margin-left: 28px;
}

.status-end {
    margin-left: auto;
    padding: 0 12px;
}

.status-end.bordered {
    margin-left: 0;
    padding: 0 24px 0 12px;
    border-left: 1px solid #cfd4db;
    line-height: 24px;
}

/* Breadcrumb popup */
.breadcrumbs {
    position: absolute;
    left: 0;
    bottom: 0;
    width: 586px;
    height: 28px;
    display: flex;
    align-items: center;
    padding-left: 14px;
    background: #1f2021;
    border-radius: 0 4px 0 0;
    color: #fff;
    font-size: 13px;
    letter-spacing: .25px;
}

.crumb-ico {
    width: 15px;
    height: 15px;
    fill: #fff;
    margin-right: 6px;
}

.crumb-sep {
    width: 16px;
    height: 16px;
    margin: 0 2px;
    color: #fff;
}
```
